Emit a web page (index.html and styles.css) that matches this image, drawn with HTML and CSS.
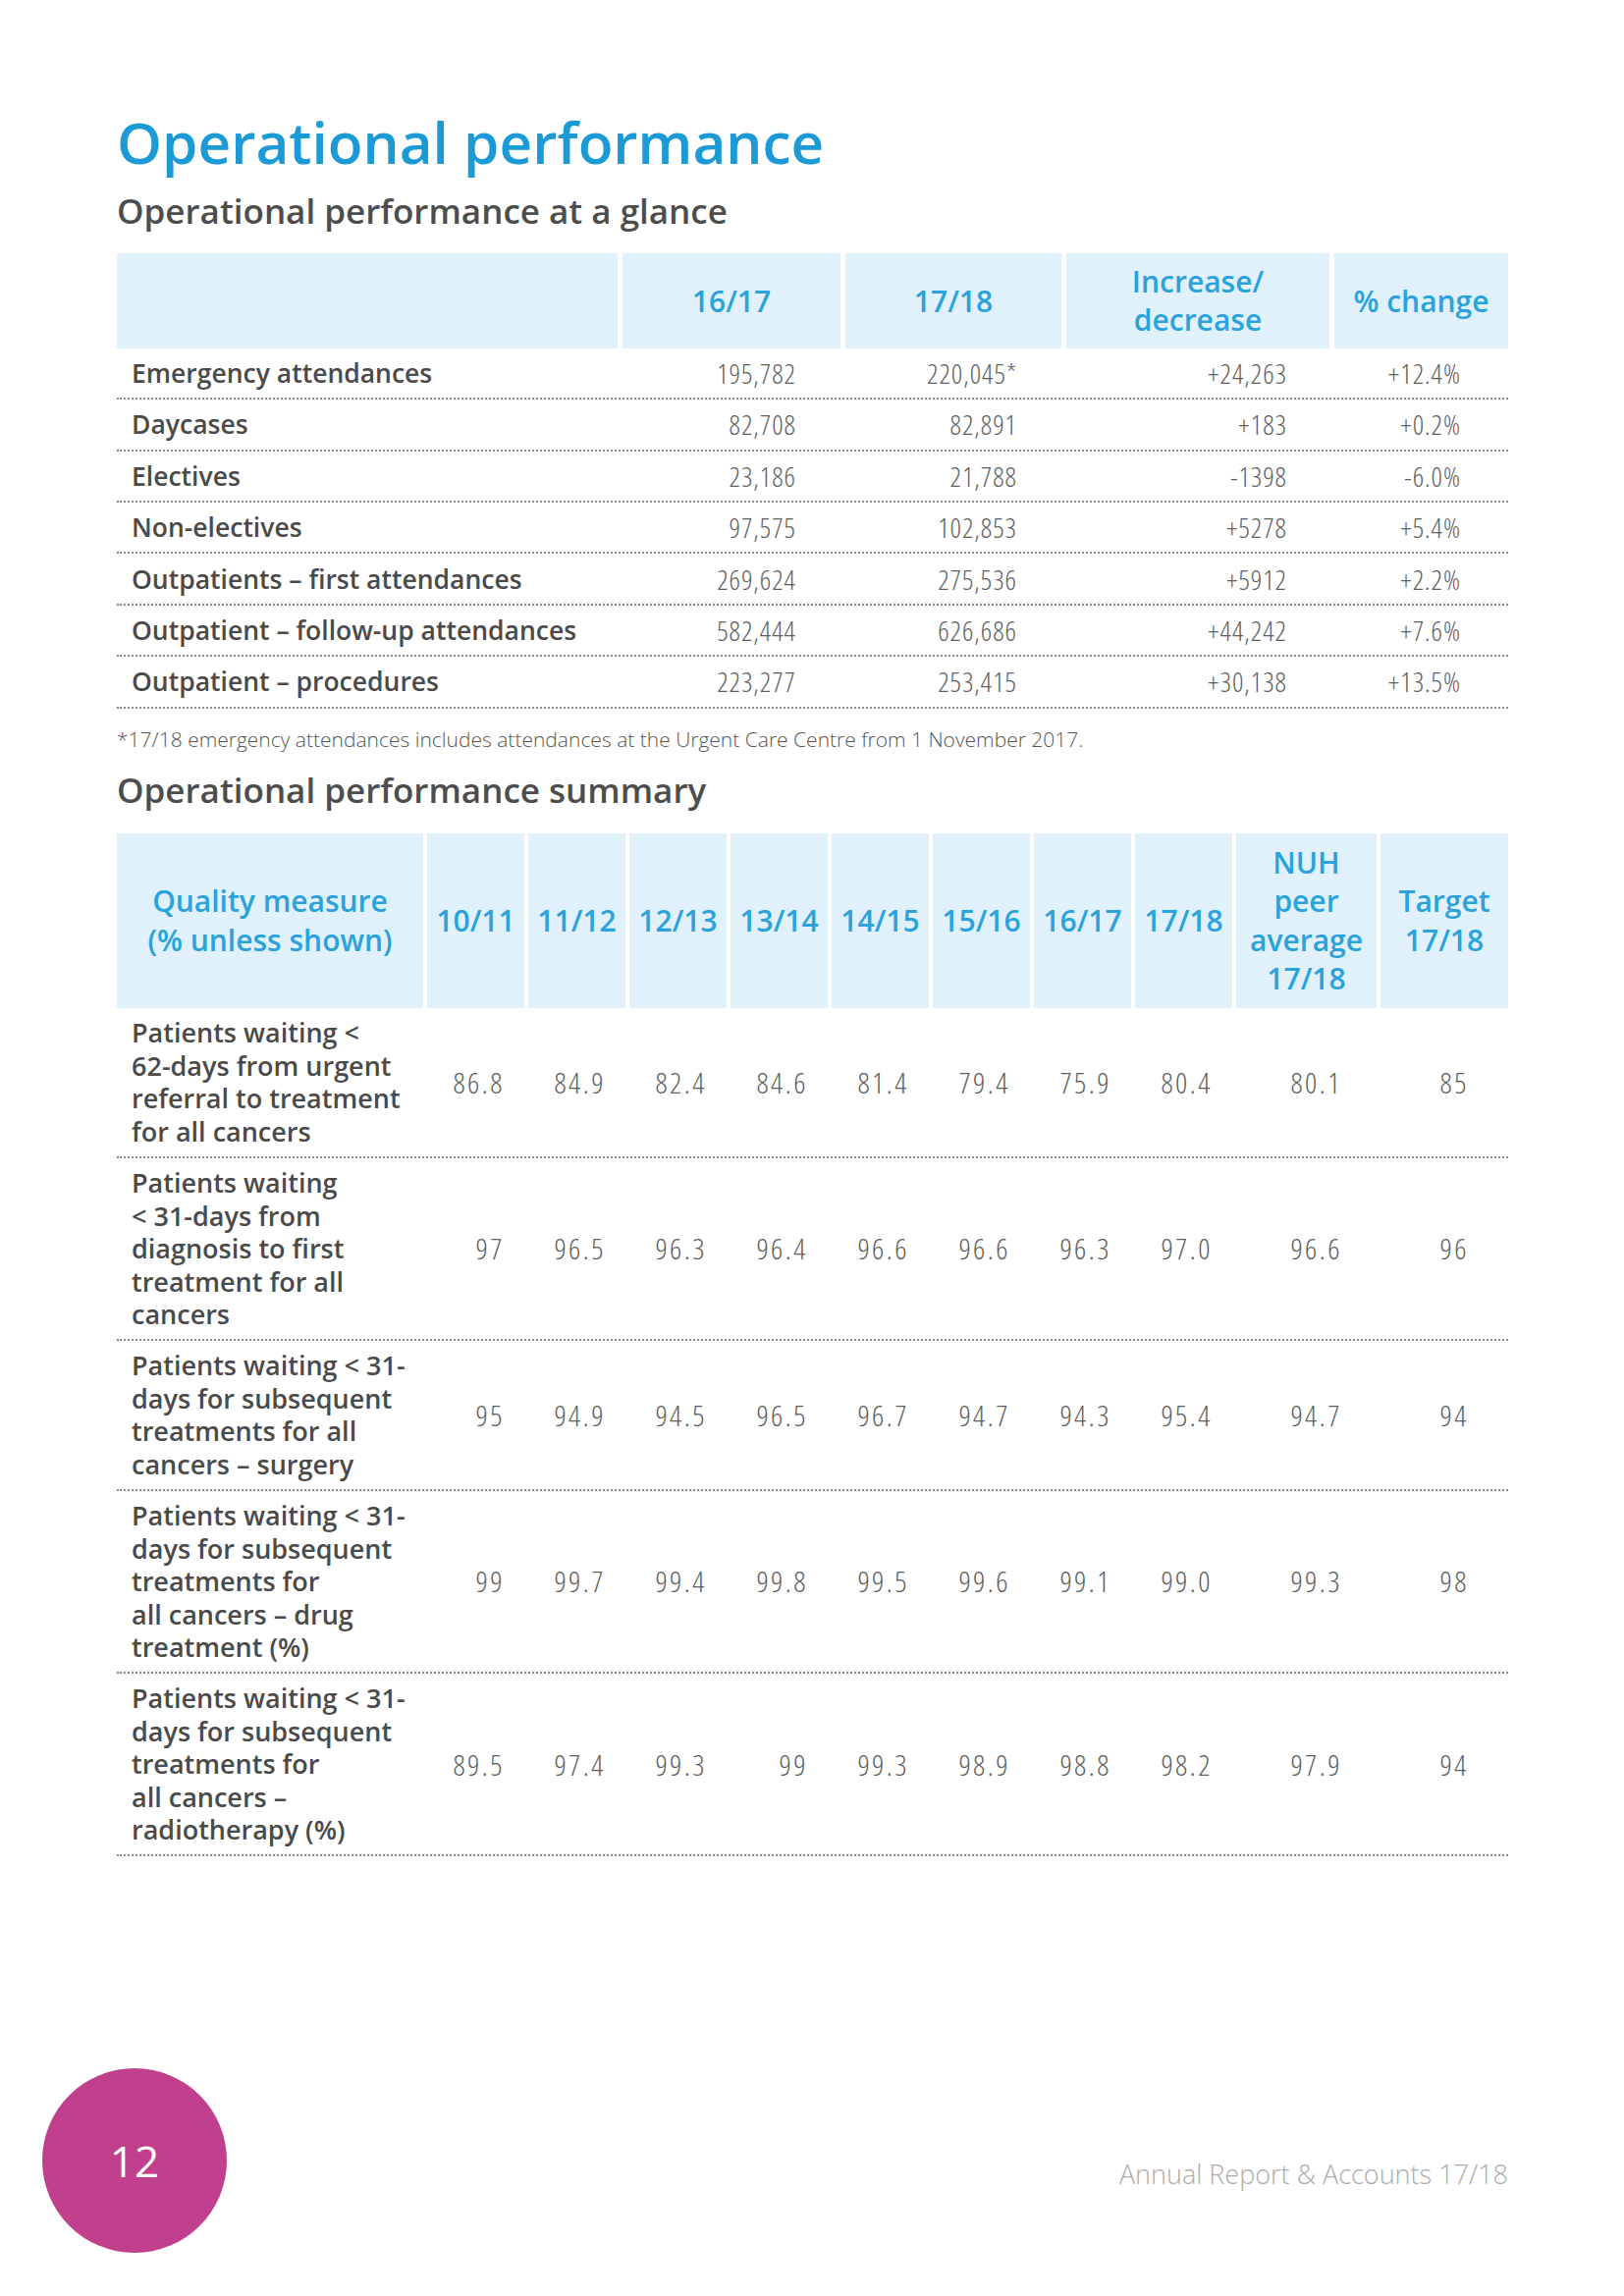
FILE: index.html
```html
<!DOCTYPE html>
<html lang="en">
<head>
<meta charset="utf-8">
<title>Operational performance</title>
<link rel="stylesheet" href="styles.css">
</head>
<body>
<div class="page">
  <h1 class="title">Operational performance</h1>
  <h2 class="subtitle">Operational performance at a glance</h2>

  <div class="t1">
    <div class="t1-row t1-head">
      <div class="hc"></div>
      <div class="hc">16/17</div>
      <div class="hc">17/18</div>
      <div class="hc">Increase/<br>decrease</div>
      <div class="hc">% change</div>
    </div>
    <div class="t1-row">
      <div class="lbl">Emergency attendances</div>
      <div class="num">195,782</div><div class="num">220,045*</div><div class="num">+24,263</div><div class="num">+12.4%</div>
    </div>
    <div class="t1-row">
      <div class="lbl">Daycases</div>
      <div class="num">82,708</div><div class="num">82,891</div><div class="num">+183</div><div class="num">+0.2%</div>
    </div>
    <div class="t1-row">
      <div class="lbl">Electives</div>
      <div class="num">23,186</div><div class="num">21,788</div><div class="num">-1398</div><div class="num">-6.0%</div>
    </div>
    <div class="t1-row">
      <div class="lbl">Non-electives</div>
      <div class="num">97,575</div><div class="num">102,853</div><div class="num">+5278</div><div class="num">+5.4%</div>
    </div>
    <div class="t1-row">
      <div class="lbl">Outpatients – first attendances</div>
      <div class="num">269,624</div><div class="num">275,536</div><div class="num">+5912</div><div class="num">+2.2%</div>
    </div>
    <div class="t1-row">
      <div class="lbl">Outpatient – follow-up attendances</div>
      <div class="num">582,444</div><div class="num">626,686</div><div class="num">+44,242</div><div class="num">+7.6%</div>
    </div>
    <div class="t1-row">
      <div class="lbl">Outpatient – procedures</div>
      <div class="num">223,277</div><div class="num">253,415</div><div class="num">+30,138</div><div class="num">+13.5%</div>
    </div>
  </div>

  <p class="note">*17/18 emergency attendances includes attendances at the Urgent Care Centre from 1 November 2017.</p>

  <h2 class="subtitle s2">Operational performance summary</h2>

  <div class="t2">
    <div class="t2-row t2-head">
      <div class="hc">Quality measure<br>(% unless shown)</div>
      <div class="hc">10/11</div>
      <div class="hc">11/12</div>
      <div class="hc">12/13</div>
      <div class="hc">13/14</div>
      <div class="hc">14/15</div>
      <div class="hc">15/16</div>
      <div class="hc">16/17</div>
      <div class="hc">17/18</div>
      <div class="hc">NUH<br>peer<br>average<br>17/18</div>
      <div class="hc">Target<br>17/18</div>
    </div>
    <div class="t2-row">
      <div class="lbl">Patients waiting &lt;<br>62-days from urgent<br>referral to treatment<br>for all cancers</div>
      <div class="num">86.8</div><div class="num">84.9</div><div class="num">82.4</div><div class="num">84.6</div><div class="num">81.4</div><div class="num">79.4</div><div class="num">75.9</div><div class="num">80.4</div><div class="num">80.1</div><div class="num">85</div>
    </div>
    <div class="t2-row">
      <div class="lbl">Patients waiting<br>&lt; 31-days from<br>diagnosis to first<br>treatment for all<br>cancers</div>
      <div class="num">97</div><div class="num">96.5</div><div class="num">96.3</div><div class="num">96.4</div><div class="num">96.6</div><div class="num">96.6</div><div class="num">96.3</div><div class="num">97.0</div><div class="num">96.6</div><div class="num">96</div>
    </div>
    <div class="t2-row">
      <div class="lbl">Patients waiting &lt; 31-<br>days for subsequent<br>treatments for all<br>cancers – surgery</div>
      <div class="num">95</div><div class="num">94.9</div><div class="num">94.5</div><div class="num">96.5</div><div class="num">96.7</div><div class="num">94.7</div><div class="num">94.3</div><div class="num">95.4</div><div class="num">94.7</div><div class="num">94</div>
    </div>
    <div class="t2-row">
      <div class="lbl">Patients waiting &lt; 31-<br>days for subsequent<br>treatments for<br>all cancers – drug<br>treatment (%)</div>
      <div class="num">99</div><div class="num">99.7</div><div class="num">99.4</div><div class="num">99.8</div><div class="num">99.5</div><div class="num">99.6</div><div class="num">99.1</div><div class="num">99.0</div><div class="num">99.3</div><div class="num">98</div>
    </div>
    <div class="t2-row">
      <div class="lbl">Patients waiting &lt; 31-<br>days for subsequent<br>treatments for<br>all cancers –<br>radiotherapy (%)</div>
      <div class="num">89.5</div><div class="num">97.4</div><div class="num">99.3</div><div class="num">99</div><div class="num">99.3</div><div class="num">98.9</div><div class="num">98.8</div><div class="num">98.2</div><div class="num">97.9</div><div class="num">94</div>
    </div>
  </div>

  <footer class="foot">
    <div class="pageno">12</div>
    <div class="report">Annual Report &amp; Accounts 17/18</div>
  </footer>
</div>
</body>
</html>
```

FILE: styles.css
```css
html, body {
  margin: 0;
  padding: 0;
  background: #ffffff;
}

.page {
  width: 1654px;
  min-height: 2339px;
  box-sizing: border-box;
  padding: 0 118px 44px 119px;
  display: flex;
  flex-direction: column;
  font-family: "Open Sans", "Noto Sans", sans-serif;
}

.title {
  margin: 115px 0 0;
  font-size: 58.5px;
  line-height: 1;
  font-weight: 600;
  color: #1c9ad6;
  letter-spacing: 0;
}

.subtitle {
  margin: 23.3px 0 0;
  font-size: 35px;
  line-height: 1;
  font-weight: 600;
  color: #4d4d4d;
}

.s2 {
  margin-top: 21.8px;
}

/* ---------- table 1 ---------- */
.t1 {
  margin-top: 26px;
}

.t1-row {
  display: grid;
  grid-template-columns: 510px 222px 220px 268px 177px;
  column-gap: 5px;
  height: 50.4px;
  border-bottom: 2px dotted #7f8b97;
  align-items: center;
}

.t1-head {
  height: 97px;
  border-bottom: none;
  align-items: stretch;
}

.hc {
  background: #e1f1fb;
  color: #2aa2dc;
  font-weight: 600;
  font-size: 30px;
  line-height: 39px;
  display: flex;
  align-items: center;
  justify-content: center;
  text-align: center;
  letter-spacing: 0;
}

.lbl {
  padding-left: 15px;
  font-size: 26.5px;
  font-weight: 600;
  color: #4a4a4a;
  white-space: nowrap;
}

.num {
  text-align: right;
  font-size: 28px;
  font-weight: 300;
  font-stretch: 85%;
  letter-spacing: 1px;
  color: #5e5e5e;
}

.t1-row .num:nth-child(2),
.t1-row .num:nth-child(3) {
  padding-right: 45px;
}
.t1-row .num:nth-child(4) {
  padding-right: 43px;
}
.t1-row .num:nth-child(5) {
  padding-right: 48px;
}

.note {
  margin: 19.5px 0 0;
  font-size: 21px;
  line-height: 24px;
  font-weight: 300;
  color: #555555;
}

/* ---------- table 2 ---------- */
.t2 {
  margin-top: 27px;
}

.t2-row {
  display: grid;
  grid-template-columns: 312px repeat(8, 99px) 143px 130px;
  column-gap: 4px;
  border-bottom: 2px dotted #7f8b97;
  align-items: center;
  padding: 8.4px 0;
}

.t2-head {
  height: 178px;
  padding: 0;
  border-bottom: none;
  align-items: stretch;
}

.t2-head .hc {
  line-height: 39.5px;
}

.t2-row .lbl {
  font-size: 27px;
  line-height: 33.5px;
}

.t2-row .num {
  font-size: 30px;
  letter-spacing: 2.5px;
  padding-right: 20px;
}
.t2-row .num:nth-child(10) {
  padding-right: 35px;
}
.t2-row .num:nth-child(11) {
  padding-right: 40px;
}

/* ---------- footer ---------- */
.foot {
  margin-top: auto;
  margin-left: -76px;
  display: flex;
  justify-content: space-between;
  align-items: flex-end;
}

.pageno {
  width: 188px;
  height: 188px;
  border-radius: 50%;
  background: #c1408d;
  color: #ffffff;
  font-size: 44px;
  font-weight: 500;
  display: flex;
  align-items: center;
  justify-content: center;
}

.report {
  margin-bottom: 67px;
  font-size: 27px;
  line-height: 1;
  font-weight: 300;
  color: #ababab;
}
```
